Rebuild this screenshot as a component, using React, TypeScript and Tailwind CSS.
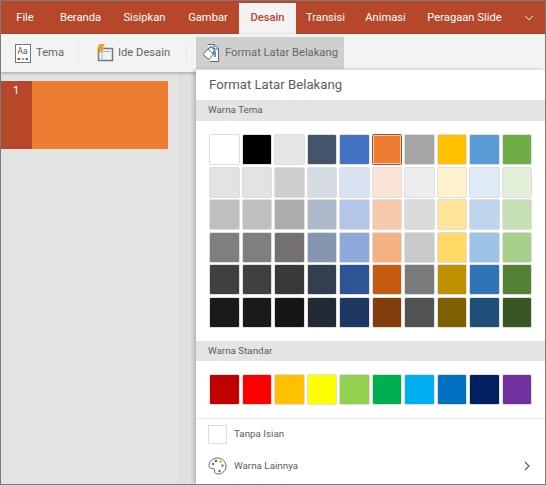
const FONT = "font-['Roboto','Open_Sans',sans-serif]";
const tabs: [string, string][] = [
  ['File', 'w-[48px]'],
  ['Beranda', 'w-[63px]'],
  ['Sisipkan', 'w-[65px]'],
  ['Gambar', 'w-[62px]'],
  ['Desain', 'w-[57px]'],
  ['Transisi', 'w-[59px]'],
  ['Animasi', 'w-[61px]'],
  ['Peragaan Slide', 'w-[97px]'],
];
const grid = [
  ['#ffffff','#000000','#e7e6e6','#44546a','#4472c4','#ed7d31','#a5a5a5','#ffc000','#5b9bd5','#70ad47'],
  ['#e3e3e3','#e3e3e3','#cfcdcd','#d6dce4','#d9e2f3','#fbe4d5','#ededed','#fff2cc','#deeaf6','#e2efd9'],
  ['#bfbfbf','#bfbfbf','#aeabab','#adb9ca','#b4c6e7','#f7caac','#dbdbdb','#ffe599','#bdd6ee','#c5e0b3'],
  ['#7f7f7f','#7f7f7f','#757070','#8496b0','#8eaadb','#f4b183','#c9c9c9','#ffd966','#9dc3e6','#a8d08d'],
  ['#404040','#404040','#3b3838','#323f4f','#2f5496','#c55a11','#7b7b7b','#bf9000','#2e75b5','#538135'],
  ['#1a1a1a','#1a1a1a','#171616','#222a35','#1f3763','#833c0b','#525252','#7f6000','#1f4e79','#375623'],
];
const std = ['#c00000','#ff0000','#ffc000','#ffff00','#92d050','#00b050','#00b0f0','#0070c0','#002060','#7030a0'];

function Swatch({ c, selected }: { c: string; selected?: boolean }) {
  if (selected) {
    return (
      <div className="h-[31px] rounded-[2px] border border-[#b7472a]">
        <div className="h-full w-full border border-[#f6c9a8]" style={{ background: c }} />
      </div>
    );
  }
  return <div className="h-[31px] rounded-[2px] border border-[#dedede]" style={{ background: c }} />;
}

function Sep() {
  return <div className="w-px h-[20px] bg-[#e6e6e6] shrink-0" />;
}

export default function App() {
  return (
    <div className={`${FONT} w-[546px] h-[485px] overflow-hidden bg-[#e3e3e3] flex flex-col border border-[#7a7a7a]`}>
      <div className="h-[33px] bg-[#b7472a] flex items-end shrink-0">
        <div className="flex items-stretch h-[31px] text-[11.2px] text-white whitespace-nowrap">
          {tabs.map(([t, w]) =>
            t === 'Desain' ? (
              <div key={t} className={`${w} bg-[#f3f3f3] text-[#b7472a] font-medium flex items-center justify-center pb-[1px]`}>{t}</div>
            ) : (
              <div key={t} className={`${w} flex items-center justify-center pb-[1px]`}>{t}</div>
            )
          )}
          <div className="w-[32px] flex items-center justify-center pb-[1px]">
            <svg width="10" height="6" viewBox="0 0 10 6" fill="none" stroke="#fff" strokeWidth="1"><path d="M1 .8 5 4.800 9 .8" /></svg>
          </div>
        </div>
      </div>

      <div className="h-[38px] bg-[#f3f3f3] flex items-start pt-[3px] shrink-0 text-[11.2px] text-[#666] shadow-[0_1px_3px_rgba(0,0,0,0.3)] relative z-10">
        <div className="flex items-center h-[32px] pl-[14px] w-[77px]">
          <svg width="16" height="19" viewBox="0 0 16 19" className="shrink-0">
            <rect x=".5" y=".5" width="15" height="18" fill="#fff" stroke="#777" />
            <text x="2.500" y="10" fontSize="8.500" fill="#555" fontFamily="Roboto, sans-serif">Aa</text>
            <rect x="2.500" y="14" width="2.500" height="2" fill="#c43e1c" />
            <rect x="6.500" y="14" width="2.500" height="2" fill="#e8a020" />
            <rect x="10.500" y="14" width="2.500" height="2" fill="#2b7cd3" />
          </svg>
          <span className="ml-[5px]">Tema</span>
        </div>
        <div className="h-[32px] flex items-center"><Sep /></div>
        <div className="flex items-center h-[32px] pl-[17px] w-[107px]">
          <svg width="18" height="18" viewBox="0 0 18 18" className="shrink-0">
            <rect x="2.500" y="4.500" width="14" height="12" fill="#f3f3f3" stroke="#777" strokeWidth="1.500" />
            <path d="M6 7.500h8M6 4.500v12" stroke="#999" strokeWidth=".8" />
            <path d="M3.500 0H9L6.500 3.500H9L2 11l1.500-5H1z" fill="#e8a020" />
          </svg>
          <span className="ml-[4px] whitespace-nowrap">Ide Desain</span>
        </div>
        <div className="h-[32px] flex items-center"><Sep /></div>
        <div className="ml-[9px] h-[32px] w-[148px] bg-[#cfcfcf] flex items-center pl-[6px] whitespace-nowrap shrink-0">
          <svg width="18" height="18" viewBox="0 0 18 18" className="shrink-0">
            <path d="M5.500 .5H12l4.500 4.500v12.500H8" fill="#fff" stroke="#666" />
            <path d="M12 .5V5h4.500" fill="none" stroke="#666" />
            <path d="M1 10.500 6 5l5.500 5-4.500 5.500z" fill="#fff" stroke="#666" />
            <path d="M6 5l3-2.500 3.500 3-1.500 5" fill="none" stroke="#2b7cd3" strokeWidth="1.200" />
            <path d="M13 7v6" stroke="#2b7cd3" strokeWidth="1.500" />
          </svg>
          <span className="ml-[5px]">Format Latar Belakang</span>
        </div>
      </div>

      <div className="flex-1 flex min-h-0">
        <div className="w-[179px] shrink-0 pt-[9px]">
          <div className="w-[167px] h-[68px] flex">
            <div className="w-[31px] bg-[#b7472a] text-white text-[11.2px] pl-[12px] pt-[2px]">1</div>
            <div className="flex-1 bg-[#ed7d31]" />
          </div>
        </div>
        <div className="w-[16px] shrink-0 bg-[#e0e0e0] border-l border-[#d9d9d9]" />
        <div className="flex-1 -mt-[2px] relative z-20 bg-white flex flex-col min-w-0 shadow-[-2px_0_4px_rgba(0,0,0,0.22)] text-[#5c5c5c]">
          <div className="h-[30px] pl-[13px] flex items-center text-[13.2px] shrink-0">Format Latar Belakang</div>
          <div className="h-[21px] pl-[12px] flex items-center bg-[#e4e4e4] text-[9.8px] shrink-0">Warna Tema</div>
          <div className="pl-[13px] pr-[13px] pt-[13px] grid grid-cols-10 gap-x-[2px] gap-y-[1.500px] shrink-0">
            {grid.flatMap((row, r) =>
              row.map((c, i) => <Swatch key={`${r}-${i}`} c={c} selected={r === 0 && i === 5} />)
            )}
          </div>
          <div className="mt-[13.500px] h-[20px] pl-[12px] flex items-center bg-[#e4e4e4] text-[9.8px] shrink-0">Warna Standar</div>
          <div className="pl-[13px] pr-[13px] py-[13px] grid grid-cols-10 gap-x-[2px] border-b border-[#ececec] shrink-0">
            {std.map((c) => <Swatch key={c} c={c} />)}
          </div>
          <div className="flex items-center h-[31px] pl-[12px] shrink-0 text-[9.8px]">
            <div className="w-[19px] h-[19px] border border-[#dcdcdc]" />
            <span className="ml-[7px]">Tanpa Isian</span>
          </div>
          <div className="flex items-center h-[32px] pl-[12px] pr-[15px] shrink-0 text-[9.8px]">
            <svg width="19" height="18" viewBox="0 0 19 18">
              <path d="M9.500 1C4.500 1 1 4.500 1 8.500c0 2.500 2 3 4 3 1.500 0 2 1 1.500 2.500-.5 2 1.500 3 3.500 3 5 0 8-4 8-8S14.500 1 9.500 1z" fill="#fff" stroke="#666" />
              <circle cx="5" cy="7" r="1.200" fill="#2b7cd3" />
              <circle cx="8" cy="4" r="1.200" fill="#c43e1c" />
              <circle cx="12.500" cy="4.500" r="1.200" fill="#e8a020" />
              <circle cx="14.500" cy="8.500" r="1.200" fill="#4e9a3b" />
              <circle cx="11.500" cy="14" r="1.200" fill="#8a3fb0" />
            </svg>
            <span className="ml-[7px]">Warna Lainnya</span>
            <svg className="ml-auto" width="6" height="10" viewBox="0 0 6 10" fill="none" stroke="#555" strokeWidth="1.100"><path d="M1 1l4 4-4 4" /></svg>
          </div>
        </div>
      </div>
    </div>
  );
}
